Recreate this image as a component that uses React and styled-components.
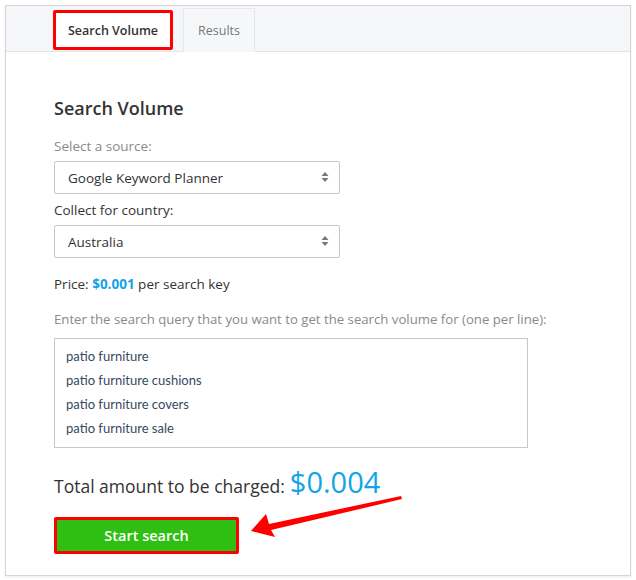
import React from "react";
import styled, { createGlobalStyle } from "styled-components";

const GlobalStyle = createGlobalStyle`
  body {
    margin: 0;
    background: #fff;
    font-family: "Open Sans", "Liberation Sans", sans-serif;
  }
`;

const queries = [
  "patio furniture",
  "patio furniture cushions",
  "patio furniture covers",
  "patio furniture sale",
];

const App = () => {
  return (
    <Page>
      <GlobalStyle />
      <Card>
        <TabBar>
          <Tab active>Search Volume</Tab>
          <Tab>Results</Tab>
        </TabBar>
        <Body>
          <Heading>Search Volume</Heading>
          <Label muted>Select a source:</Label>
          <SelectWrap>
            <Select defaultValue="gkp">
              <option value="gkp">Google Keyword Planner</option>
            </Select>
            <Arrows />
          </SelectWrap>
          <Label>Collect for country:</Label>
          <SelectWrap>
            <Select defaultValue="au">
              <option value="au">Australia</option>
            </Select>
            <Arrows />
          </SelectWrap>
          <Price>
            Price: <strong>$0.001</strong> per search key
          </Price>
          <Label muted spaced>
            Enter the search query that you want to get the search volume for (one per line):
          </Label>
          <QueryBox>
            {queries.map((q) => (
              <QueryLine key={q}>{q}</QueryLine>
            ))}
          </QueryBox>
          <Total>
            Total amount to be charged: <Amount>$0.004</Amount>
          </Total>
          <ButtonRow>
            <StartButton type="button">Start search</StartButton>
            <Pointer width="160" height="44" viewBox="0 0 160 44">
              <polygon points="150,0 151,3 20,34 24,41 0,35 15,18 18,28" fill="#f00" />
            </Pointer>
          </ButtonRow>
        </Body>
      </Card>
    </Page>
  );
};

const Arrows = () => (
  <ArrowIcon width="8" height="12" viewBox="0 0 8 12">
    <polygon points="4,1 7.5,5 0.5,5" fill="#777" />
    <polygon points="0.5,7 7.5,7 4,11" fill="#777" />
  </ArrowIcon>
);

const Page = styled.div`
  padding: 5px;
`;

const Card = styled.div`
  width: 624px;
  border: 1px solid #d6d6d6;
  box-shadow: 0 1px 2px rgba(0, 0, 0, 0.08);
  background: #fff;
`;

const TabBar = styled.div`
  display: flex;
  align-items: flex-end;
  gap: 10px;
  height: 45px;
  padding-left: 47px;
  background: #f5f6f9;
  border-bottom: 1px solid #e3e5e8;
`;

const Tab = styled.div`
  display: flex;
  align-items: center;
  justify-content: center;
  box-sizing: border-box;
  font-size: 12.5px;
  font-weight: ${(p) => (p.active ? 600 : 400)};
  color: ${(p) => (p.active ? "#333" : "#777")};
  background: ${(p) => (p.active ? "#fff" : "#f6f7f9")};
  border: ${(p) => (p.active ? "3px solid #f00" : "1px solid #e6e7ea")};
  border-radius: ${(p) => (p.active ? "2px" : "0")};
  height: ${(p) => (p.active ? "40px" : "44px")};
  margin-bottom: ${(p) => (p.active ? "1px" : "-1px")};
  width: ${(p) => (p.active ? "120px" : "72px")};
  border-bottom-color: ${(p) => (p.active ? "#f00" : "#f6f7f9")};
`;

const Body = styled.div`
  padding: 44px 20px 21px 48px;
  display: flex;
  flex-direction: column;
`;

const Heading = styled.h2`
  margin: 0 0 16px;
  font-size: 18px;
  line-height: 24px;
  font-weight: 600;
  color: #333;
`;

const Label = styled.div`
  font-size: ${(p) => (p.spaced ? "13.2px" : "13.5px")};
  line-height: 20px;
  color: ${(p) => (p.muted ? "#8a8a8a" : "#333")};
  margin-bottom: ${(p) => (p.spaced ? "9px" : "5px")};
`;

const SelectWrap = styled.div`
  position: relative;
  width: 286px;
  margin-bottom: 6px;
`;

const Select = styled.select`
  appearance: none;
  width: 100%;
  height: 33px;
  box-sizing: border-box;
  padding: 0 28px 0 13px;
  border: 1px solid #c8c8c8;
  border-radius: 2px;
  background: #fff;
  font-family: "Open Sans", "Liberation Sans", sans-serif;
  font-size: 13.5px;
  color: #333;
  outline: none;
`;

const ArrowIcon = styled.svg`
  position: absolute;
  right: 11px;
  top: 10px;
  pointer-events: none;
`;

const Price = styled.div`
  margin-top: 10px;
  font-size: 13.5px;
  line-height: 20px;
  color: #333;
  margin-bottom: 15px;

  strong {
    color: #12a4e6;
    font-weight: 700;
  }
`;

const QueryBox = styled.div`
  width: 474px;
  height: 110px;
  box-sizing: border-box;
  border: 1px solid #c8c8c8;
  padding: 5px 11px;
  font-family: Lato, "Liberation Sans", sans-serif;
  font-size: 13px;
  line-height: 24px;
  color: #34495e;
`;

const QueryLine = styled.div``;

const Total = styled.div`
  margin-top: 16px;
  display: flex;
  align-items: baseline;
  gap: 5px;
  font-size: 17.5px;
  line-height: 36px;
  font-weight: 400;
  color: #333;
`;

const Amount = styled.span`
  font-size: 29px;
  font-weight: 400;
  color: #12a4e6;
`;

const ButtonRow = styled.div`
  position: relative;
  margin-top: 13px;
`;

const StartButton = styled.button`
  width: 185px;
  height: 37px;
  box-sizing: border-box;
  border: 3px solid #f00;
  border-radius: 2px;
  background: #2fbe12;
  color: #fff;
  font-family: "Open Sans", "Liberation Sans", sans-serif;
  font-size: 14.5px;
  font-weight: 600;
  cursor: pointer;
`;

const Pointer = styled.svg`
  position: absolute;
  left: 197px;
  top: -21px;
`;

export default App;
